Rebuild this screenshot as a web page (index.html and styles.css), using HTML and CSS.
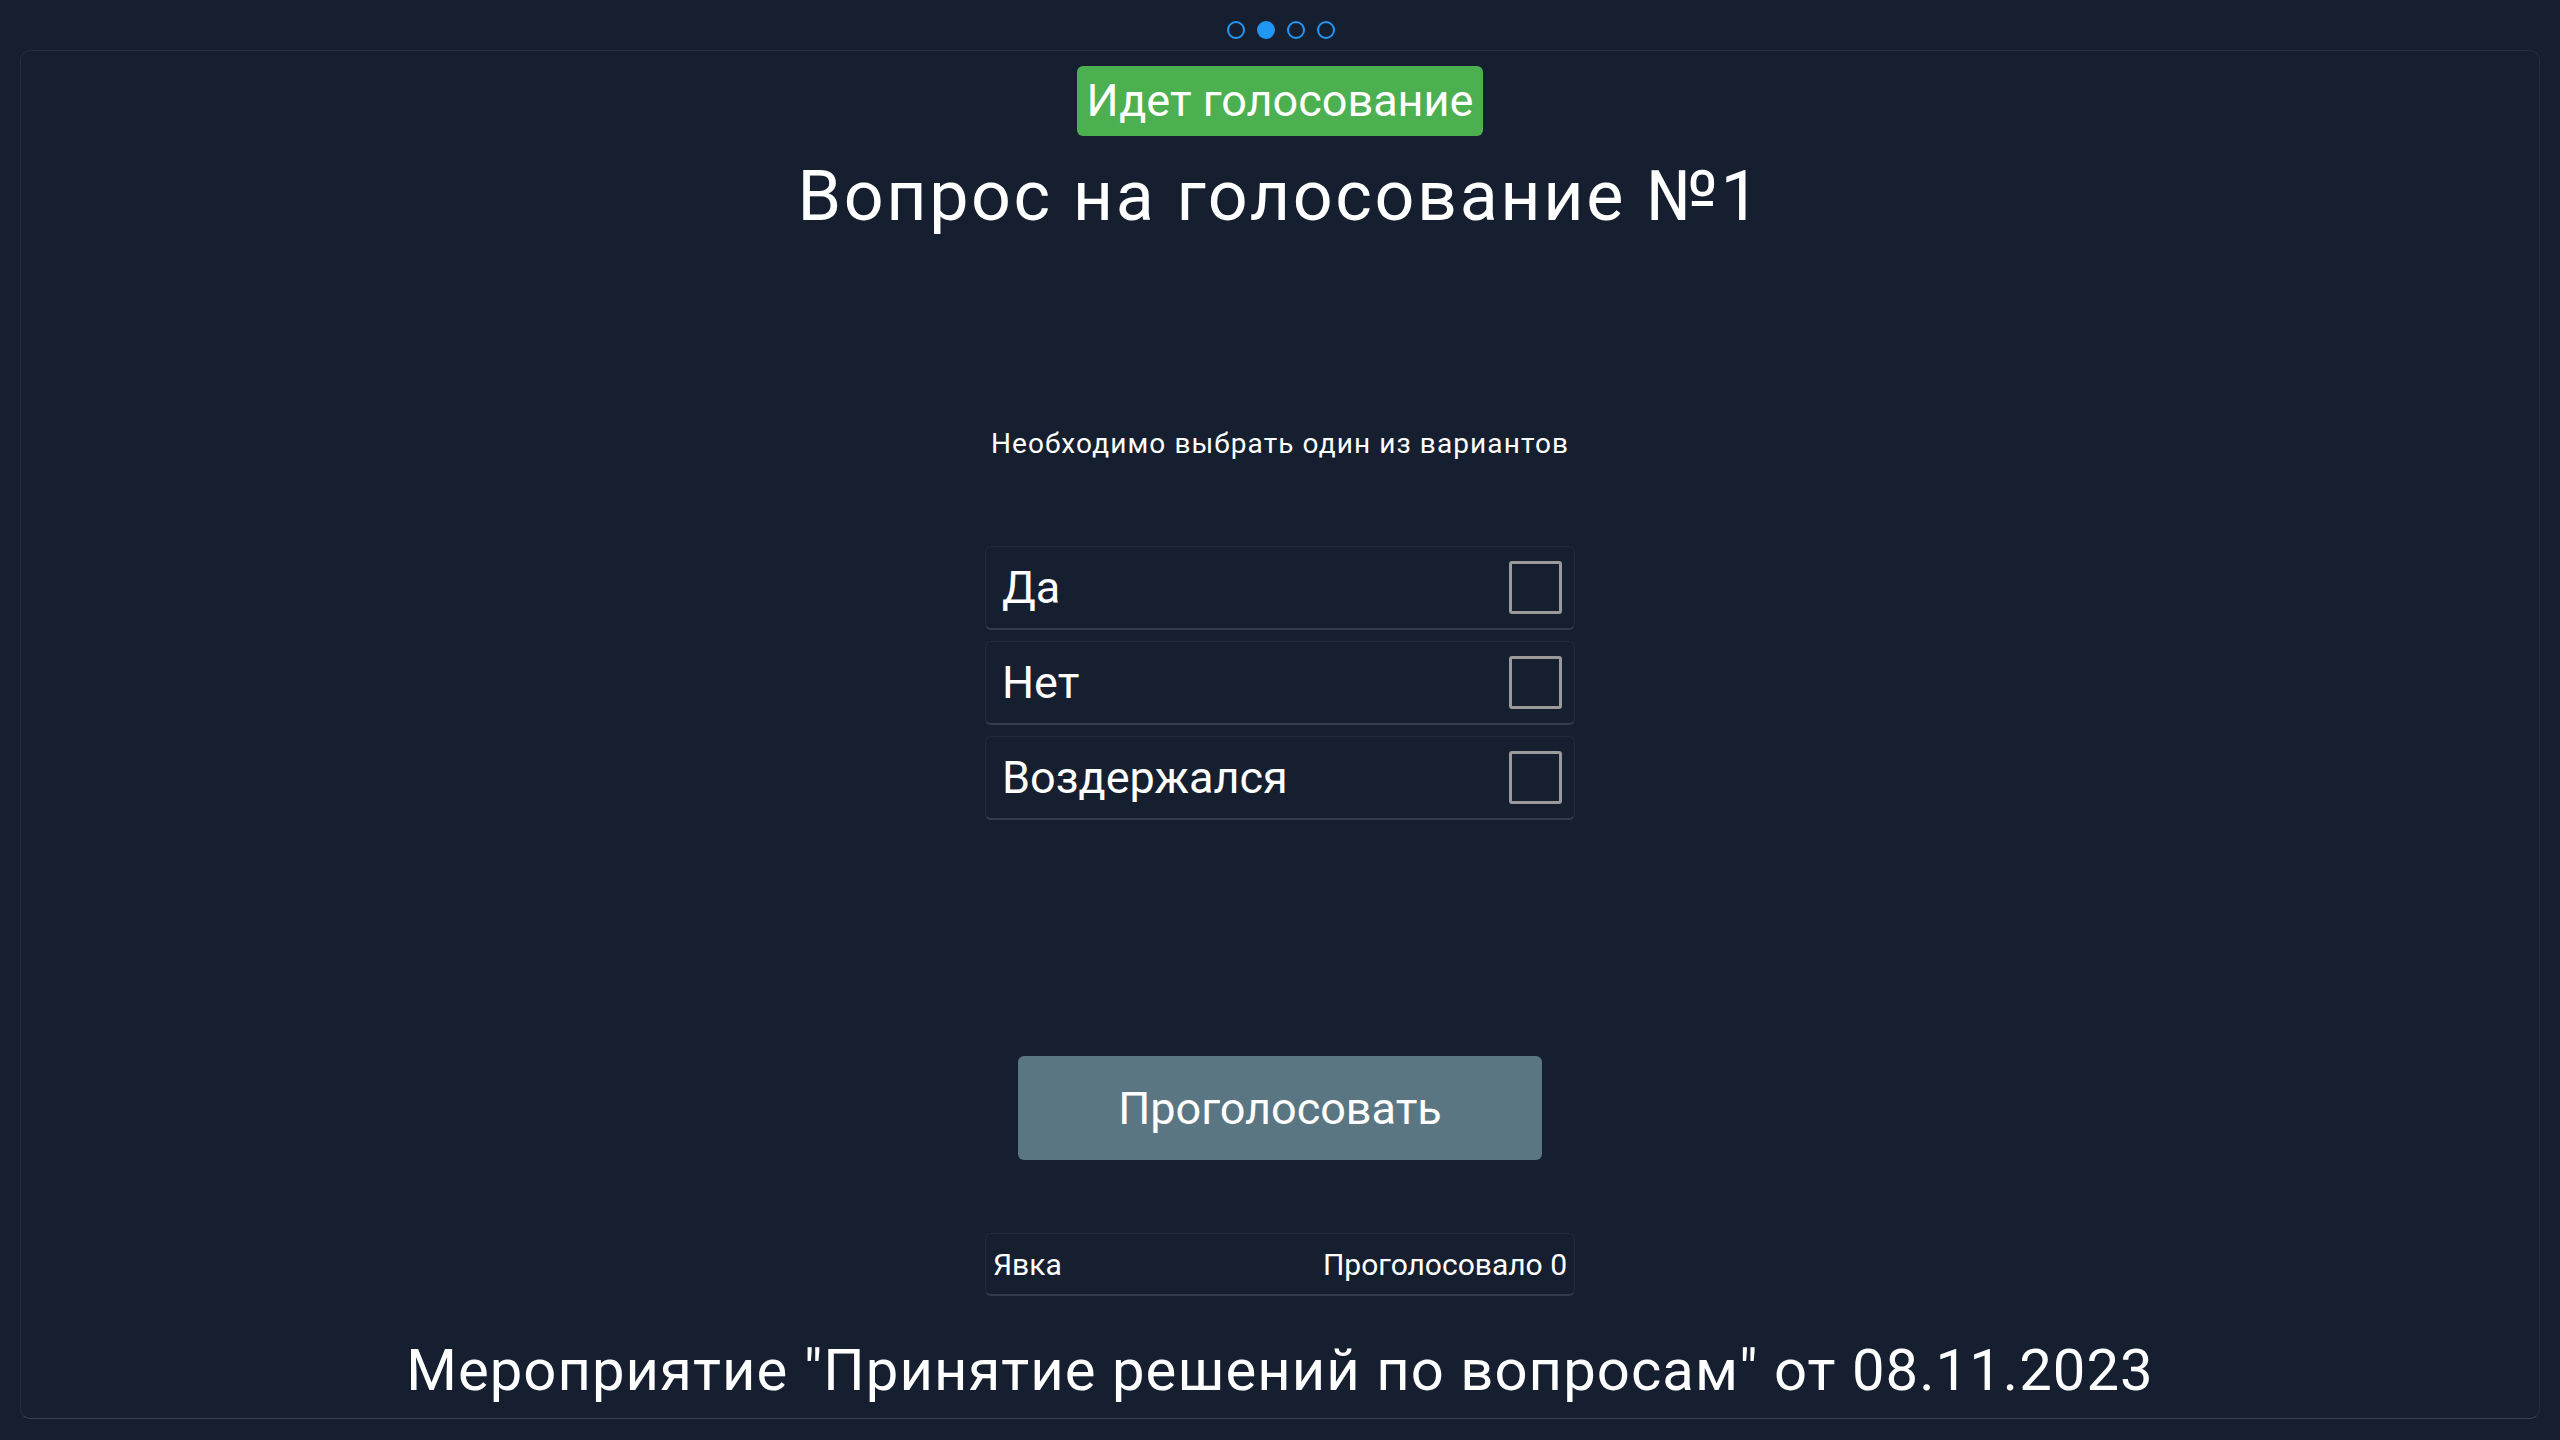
FILE: index.html
```html
<!DOCTYPE html>
<html lang="ru">
<head>
<meta charset="utf-8">
<title>Голосование</title>
<link rel="stylesheet" href="styles.css">
</head>
<body>
<div class="page">
  <div class="dots">
    <span class="dot"></span>
    <span class="dot active"></span>
    <span class="dot"></span>
    <span class="dot"></span>
  </div>
  <main class="card">
    <div class="badge">Идет голосование</div>
    <h1 class="title">Вопрос на голосование №1</h1>
    <p class="hint">Необходимо выбрать один из вариантов</p>
    <div class="options">
      <label class="option"><span class="option-label">Да</span><span class="checkbox"></span></label>
      <label class="option"><span class="option-label">Нет</span><span class="checkbox"></span></label>
      <label class="option"><span class="option-label">Воздержался</span><span class="checkbox"></span></label>
    </div>
    <button class="vote-btn">Проголосовать</button>
    <div class="turnout">
      <span>Явка</span>
      <span>Проголосовало 0</span>
    </div>
    <div class="event">Мероприятие "Принятие решений по вопросам" от 08.11.2023</div>
  </main>
</div>
</body>
</html>
```

FILE: styles.css
```css
* { box-sizing: border-box; }
html, body {
  margin: 0;
  padding: 0;
  background: #161f30;
  color: #ffffff;
  font-family: Roboto, "Noto Sans", sans-serif;
}
.page {
  width: 2560px;
  height: 1440px;
  display: flex;
  flex-direction: column;
  padding: 0 20px 21px;
}
.dots {
  height: 50px;
  display: flex;
  justify-content: center;
  align-items: center;
  gap: 12px;
  padding: 10px 0 0 1px;
}
.dot {
  width: 18px;
  height: 18px;
  border-radius: 50%;
  border: 2px solid #2196f3;
}
.dot.active {
  background: #2196f3;
}
.card {
  flex: 1;
  border: 1px solid #262f3f;
  border-bottom-color: #3a4352;
  border-radius: 10px;
  display: flex;
  flex-direction: column;
  align-items: center;
  padding-top: 15px;
}
.badge {
  height: 70px;
  line-height: 70px;
  padding: 0 10px;
  background: #4caf50;
  border-radius: 6px;
  font-size: 45px;
  color: #fff;
}
.title {
  margin: 19px 0 0;
  font-size: 70px;
  font-weight: 400;
  line-height: 83px;
  letter-spacing: 2.6px;
}
.hint {
  margin: 189px 0 0;
  font-size: 28px;
  line-height: 34px;
  letter-spacing: 1.1px;
}
.options {
  margin-top: 85px;
  width: 590px;
  display: flex;
  flex-direction: column;
  gap: 11px;
}
.option {
  height: 84px;
  border: 1px solid #222b3a;
  border-bottom: 2px solid #333c4b;
  border-radius: 6px;
  display: flex;
  align-items: center;
  justify-content: space-between;
  padding: 0 12px 0 16px;
}
.option-label {
  font-size: 45px;
}
.checkbox {
  width: 53px;
  height: 53px;
  border: 3px solid #9a9a9a;
  border-radius: 3px;
}
.vote-btn {
  margin-top: 236px;
  width: 524px;
  height: 104px;
  border: none;
  border-radius: 6px;
  background: #5b7683;
  color: #fff;
  font-family: Roboto, "Noto Sans", sans-serif;
  font-size: 45px;
  padding: 0;
}
.turnout {
  margin-top: 73px;
  width: 590px;
  height: 63px;
  border: 1px solid #222b3a;
  border-bottom: 2px solid #333c4b;
  border-radius: 6px;
  display: flex;
  align-items: center;
  justify-content: space-between;
  padding: 0 7px;
  font-size: 30px;
}
.event {
  margin-top: 40px;
  font-size: 58px;
  line-height: 68px;
  letter-spacing: 1.05px;
}
```
